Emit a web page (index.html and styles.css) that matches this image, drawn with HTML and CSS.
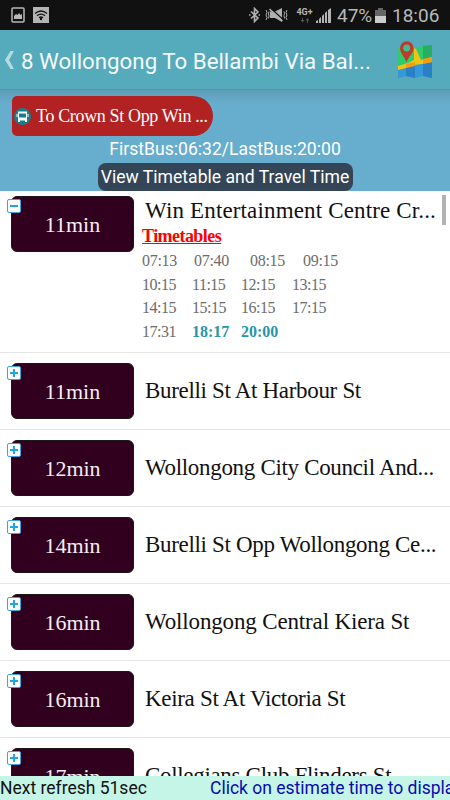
FILE: index.html
```html
<!DOCTYPE html>
<html lang="en">
<head>
    <meta charset="UTF-8">
    <meta name="viewport" content="width=device-width, initial-scale=1.0">
    <title>8 Wollongong To Bellambi</title>
    <link rel="stylesheet" href="styles.css">
</head>
<body>
    <div class="status-bar">
        <svg class="icon-picture" width="14" height="16" viewBox="0 0 14 16">
            <rect x="1" y="1" width="12" height="14" rx="1" fill="none" stroke="#b8b8b8" stroke-width="1.5"/>
            <path d="M3 12V9l2-2 1.5 1L8 6l1.5 2 1.5-1v5z" fill="#b8b8b8"/>
        </svg>
        <svg class="icon-wifi" width="16" height="16" viewBox="0 0 16 16">
            <rect width="16" height="16" fill="#b4b4b4"/>
            <path d="M2 6.5q6-5 12 0M4 8.8q4-3.3 8 0M6 10.8q2-1.6 4 0" fill="none" stroke="#111" stroke-width="1.3"/>
            <circle cx="8" cy="12" r="1.2" fill="#111"/>
        </svg>
        <svg class="icon-bluetooth" width="12" height="16" viewBox="0 0 12 16">
            <path d="M2 4.5l7 6.5-3.5 3.5v-13L9 5l-7 6.5" fill="none" stroke="#b0b0b0" stroke-width="1.6"/>
            <path d="M0 8h1.5M9.5 8H11" stroke="#b0b0b0" stroke-width="1.5"/>
        </svg>
        <svg class="icon-mute" width="23" height="16" viewBox="0 0 23 16">
            <path d="M5 4.500h5l7-3.500v14l-7-4H5z" fill="#b0b0b0"/>
            <path d="M5.500 1l13 12" stroke="#111" stroke-width="1.300"/>
            <path d="M4.500 2l13 12" stroke="#b0b0b0" stroke-width="1.500"/>
            <path d="M1 3l1 2.500L1 8l1 2.500L1 13M4 4.500L3.500 7l.5 2-.5 2.500M19 4.500l.5 2-.5 2 .5 3M22 3l-1 2.500L22 8l-1 2.500 1 2.500" fill="none" stroke="#b0b0b0"/>
        </svg>
        <div class="network">
            <span>4G+</span>
            <svg width="10" height="5" viewBox="0 0 10 5">
                <path d="M2 0h1v2h1.500l-2 2.500L.5 2H2zM7 5h1V2.500h1.500L7.500 0l-2 2.500H7z" fill="#555"/>
            </svg>
        </div>
        <svg class="icon-signal" width="15" height="15" viewBox="0 0 15 15">
            <path d="M0 15v-2l2-1v3zM3 15v-4l2-2v6zM6 15V8l2-2v9zM9 15V5l2-2v12zM12 15V2l3-2v15z" fill="#b4b4b4"/>
        </svg>
        <span class="percent">47%</span>
        <svg class="icon-battery" width="11" height="15" viewBox="0 0 11 15">
            <path d="M3 0h5v2h3v6H0V2h3z" fill="#666"/>
            <path d="M0 8h11v7H0z" fill="#ccc"/>
        </svg>
        <span class="clock">18:06</span>
    </div>

    <div class="title-bar">
        <svg class="back" width="9" height="18" viewBox="0 0 9 18">
            <path d="M5.5 0H9L4 9l5 9H5.5L0 9z" fill="#b5dce3"/>
        </svg>
        <h1>8 Wollongong To Bellambi Via Bal...</h1>
        <svg class="map" width="36" height="38" viewBox="0 0 36 38">
            <path d="M1 7l8-2 9 3v18L9 24l-8 3z" fill="#2ecc71"/>
            <path d="M18 8l8-3 9-1v19l-9-1-8 4z" fill="#2ecc71"/>
            <path d="M26 5l9-1v19l-9-1z" fill="#27ae60"/>
            <path d="M1 28l8-3 9-1v13l-9-2-8 2z" fill="#3498db"/>
            <path d="M9 25l9-1v13l-9-2z" fill="#2980c4"/>
            <path d="M18 24l8-2 9-2v17l-9-2-8 2z" fill="#3498db"/>
            <path d="M26 22l9-2v17l-9-2z" fill="#2980c4"/>
            <path d="M1 25l10-3 6-3V7l2 1 5 11 11-3v5l-10 2-8 1-8 3-8 2z" fill="#f1c40f"/>
            <path d="M9 23l9-2v4l-9 2zM26 18l9-2v5l-9 2z" fill="#f39c12"/>
            <path d="M9.500 21C7 15 3 12 3 7a6.800 6.800 0 0 1 13.600 0c0 5-4.600 8-7.100 14z" fill="#c0392b"/>
            <circle cx="9.700" cy="7" r="3.500" fill="#3cbf92"/>
        </svg>
    </div>

    <div class="route">
        <div class="direction">
            <svg width="17" height="17" viewBox="0 0 17 17">
                <circle cx="8.500" cy="8.500" r="8.500" fill="#167f8d"/>
                <path d="M4 3.500h9v9H4z" fill="#fff"/>
                <path d="M5 5.500h7v4H5z" fill="#167f8d"/>
                <path d="M4 12h2v2H4zM11 12h2v2h-2zM2.500 6h1v3h-1zM13.500 6h1v3h-1z" fill="#fff"/>
            </svg>
            <span>To Crown St Opp Win ...</span>
        </div>
        <div class="first-last">FirstBus:06:32/LastBus:20:00</div>
        <div class="view-button">View Timetable and Travel Time</div>
    </div>

    <div class="stops">
        <div class="scrollbar"></div>
        <div class="stop open">
            <div class="eta">11min<i class="toggle minus"></i></div>
            <div class="info">
                <div class="name">Win Entertainment Centre Cr...</div>
                <div class="timetables">Timetables</div>
                <div class="times first"><span>07:13</span><span>07:40</span><span>08:15</span><span>09:15</span></div>
                <div class="times"><span>10:15</span><span>11:15</span><span>12:15</span><span>13:15</span></div>
                <div class="times"><span>14:15</span><span>15:15</span><span>16:15</span><span>17:15</span></div>
                <div class="times"><span>17:31</span><b>18:17</b><b>20:00</b></div>
            </div>
        </div>
        <div class="stop">
            <div class="eta">11min<i class="toggle"></i></div>
            <div class="name">Burelli St At Harbour St</div>
        </div>
        <div class="stop">
            <div class="eta">12min<i class="toggle"></i></div>
            <div class="name">Wollongong City Council And...</div>
        </div>
        <div class="stop">
            <div class="eta">14min<i class="toggle"></i></div>
            <div class="name">Burelli St Opp Wollongong Ce...</div>
        </div>
        <div class="stop">
            <div class="eta">16min<i class="toggle"></i></div>
            <div class="name loose">Wollongong Central Kiera St</div>
        </div>
        <div class="stop">
            <div class="eta">16min<i class="toggle"></i></div>
            <div class="name">Keira St At Victoria St</div>
        </div>
        <div class="stop">
            <div class="eta">17min<i class="toggle"></i></div>
            <div class="name">Collegians Club Flinders St</div>
        </div>
    </div>

    <div class="footer">
        <span>Next refresh 51sec</span>
        <span class="hint">Click on estimate time to display</span>
    </div>
</body>
</html>
```
FILE: styles.css
```css
* {
    box-sizing: border-box;
}
body {
    margin: 0;
    width: 450px;
    height: 800px;
    overflow: hidden;
    display: flex;
    flex-direction: column;
    font-family: Roboto, sans-serif;
    background: #fff;
    white-space: nowrap;
}
svg {
    flex: none;
}

/* top bars */
.status-bar {
    height: 30px;
    flex: none;
    display: flex;
    align-items: center;
    padding-left: 11px;
    background: #111;
    color: #b8b8b8;
}
.icon-wifi {
    margin-left: 8px;
}
.icon-bluetooth {
    margin-left: 200px;
}
.icon-mute {
    margin-left: 4px;
}
.network {
    margin-left: 8px;
    width: 17px;
    font-size: 9px;
    font-weight: bold;
    line-height: 9px;
    display: flex;
    flex-direction: column;
    align-items: center;
    gap: 1px;
}
.icon-signal {
    margin-left: 3px;
}
.percent {
    margin-left: 6px;
    width: 34px;
    font-size: 19px;
}
.icon-battery {
    margin-left: 4px;
}
.clock {
    margin-left: 6px;
    font-size: 19px;
}
.title-bar {
    height: 60px;
    flex: none;
    display: flex;
    align-items: center;
    padding-left: 5px;
    background: #55aabc;
    border-bottom: 1px solid #4f97ae;
}
.title-bar h1 {
    margin: 3px 0 0 7px;
    width: 376px;
    color: #f4fafb;
    font-size: 22.3px;
    font-weight: normal;
}
.route {
    height: 101px;
    flex: none;
    display: flex;
    flex-direction: column;
    align-items: center;
    padding-top: 6px;
    background: linear-gradient(#5f9db8, #67adcd 14px);
    color: #fff;
}
.direction {
    align-self: flex-start;
    margin-left: 12px;
    width: 201px;
    height: 40px;
    display: flex;
    align-items: center;
    gap: 5px;
    padding-left: 2px;
    background: #b22222;
    border-radius: 5px 20px 20px 5px;
    font-family: "Liberation Serif", serif;
    font-size: 18px;
    letter-spacing: -0.35px;
}
.first-last {
    height: 27px;
    line-height: 27px;
    font-size: 17.6px;
}
.view-button {
    width: 255px;
    height: 28px;
    line-height: 29px;
    background: #344557;
    border-radius: 8px;
    font-size: 17.6px;
    text-align: center;
}

/* stop list */
.stops {
    position: relative;
    flex: 1;
    overflow: hidden;
    font-family: "Liberation Serif", serif;
}
.scrollbar {
    position: absolute;
    top: 4px;
    right: 4px;
    width: 4px;
    height: 30px;
    background: #b2b2b2;
}
.stop {
    height: 77px;
    display: flex;
    align-items: center;
    gap: 11px;
    padding-left: 11px;
    border-bottom: 1px solid #e6e6e6;
}
.stop.open {
    height: 162px;
    align-items: flex-start;
    gap: 8px;
    padding-top: 5px;
}
.eta {
    position: relative;
    width: 123px;
    height: 56px;
    flex: none;
    line-height: 56px;
    background: #31001e;
    border: 1px solid #1c1714;
    border-radius: 6px;
    color: #f3eef0;
    font-size: 22px;
    text-align: center;
}
.toggle {
    position: absolute;
    top: 2px;
    left: -5px;
    width: 14px;
    height: 14px;
    background: #fff;
    border: 1px solid #3ba3dd;
    border-radius: 2px;
}
.toggle::before, .toggle::after {
    content: "";
    position: absolute;
    top: 5px;
    left: 2px;
    width: 8px;
    height: 2px;
    background: #1ea7e0;
}
.toggle::after {
    transform: rotate(90deg);
}
.toggle.minus::after {
    display: none;
}
.name {
    font-size: 23px;
    letter-spacing: -0.32px;
    color: #111;
}
.name.loose {
    letter-spacing: -0.15px;
}
.info .name {
    height: 29px;
    line-height: 29px;
    padding-left: 3px;
    letter-spacing: 0.15px;
}
.timetables {
    height: 23px;
    line-height: 22px;
    color: #f00;
    font-size: 18px;
    font-weight: bold;
    letter-spacing: -0.55px;
    text-decoration: underline;
}
.times {
    display: grid;
    grid-template-columns: 50px 49px 51px 40px;
    height: 23.7px;
    line-height: 25px;
    font-size: 16px;
    letter-spacing: -0.5px;
    color: #6c6c6c;
}
.times.first {
    grid-template-columns: 52px 56px 53px 40px;
    letter-spacing: -0.3px;
}
.times b {
    color: #2796a8;
    letter-spacing: 0;
}

.footer {
    height: 24px;
    flex: none;
    display: flex;
    line-height: 25px;
    background: #c5f5e6;
    color: #111;
    font-size: 17.5px;
    overflow: hidden;
}
.footer span {
    width: 210px;
    flex: none;
}
.footer .hint {
    color: #0a0aad;
}
```
